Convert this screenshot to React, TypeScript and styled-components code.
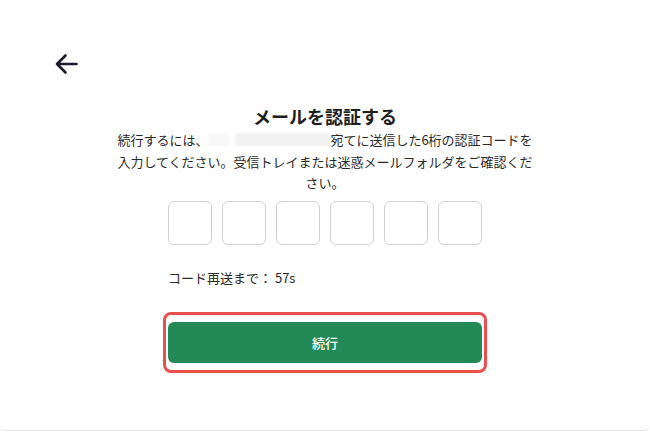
import styled, { createGlobalStyle } from 'styled-components';

const GlobalStyle = createGlobalStyle`
  html, body {
    margin: 0;
    padding: 0;
    background: #ffffff;
  }
  body {
    font-family: "Noto Sans CJK JP", "Noto Sans", "Liberation Sans", sans-serif;
    color: #222222;
  }
`;

const Card = styled.div`
  box-sizing: border-box;
  height: 431px;
  background: #ffffff;
  border-bottom: 1px solid #e4e4e4;
  border-radius: 0 0 6px 6px;
  padding: 53px 0 0;
`;

const BackButton = styled.button`
  display: block;
  margin-left: 54px;
  padding: 0;
  border: none;
  background: none;
  width: 24px;
  height: 22px;
  cursor: pointer;
  color: #1c1c2a;
`;

const Content = styled.div`
  display: flex;
  flex-direction: column;
  align-items: center;
  margin-top: 28px;
`;

const Title = styled.h1`
  margin: 0;
  font-size: 18px;
  font-weight: 700;
  line-height: 26px;
  color: #1f1f1f;
`;

const Description = styled.p`
  margin: 0;
  width: 420px;
  font-size: 13px;
  line-height: 21.5px;
  text-align: center;
  color: #2a2a2a;
`;

// the address is blurred out in the screenshot
const Blurred = styled.span`
  display: inline-block;
  width: 122px;
  height: 13px;
  vertical-align: -1px;
  background: linear-gradient(
    to right,
    #f8f8f8 0 18%,
    #ffffff 18% 22%,
    #f2f2f2 22% 100%
  );
  filter: blur(1px);
`;

const CodeRow = styled.div`
  display: flex;
  gap: 10px;
  margin-top: 7px;
`;

const CodeBox = styled.input`
  box-sizing: border-box;
  width: 44px;
  height: 44px;
  border: 1px solid #d2d2d2;
  border-radius: 6px;
  background: #ffffff;
  text-align: center;
  font-size: 18px;
  outline: none;
`;

const Resend = styled.div`
  width: 314px;
  margin-top: 23px;
  font-size: 13px;
  line-height: 20px;
  color: #2a2a2a;
`;

const Highlight = styled.div`
  margin-top: 24px;
  padding: 7px 2px;
  border: 3px solid #e8504d;
  border-radius: 8px;
`;

const SubmitButton = styled.button`
  display: block;
  width: 314px;
  height: 41px;
  border: none;
  border-radius: 6px;
  background: #238a57;
  color: #ffffff;
  font-family: inherit;
  font-size: 13px;
  font-weight: 500;
  cursor: pointer;
`;

function ArrowLeft() {
  return (
    <svg width="24" height="22" viewBox="0 0 24 22" fill="none">
      <path
        d="M22.5 11H3M11.5 2.5L3 11l8.5 8.5"
        stroke="currentColor"
        strokeWidth="2.6"
        strokeLinecap="round"
        strokeLinejoin="round"
      />
    </svg>
  );
}

export default function App() {
  const digits = [0, 1, 2, 3, 4, 5];
  return (
    <>
      <GlobalStyle />
      <Card>
        <BackButton aria-label="戻る">
          <ArrowLeft />
        </BackButton>
        <Content>
          <Title>メールを認証する</Title>
          <Description>
            続行するには、<Blurred />宛てに送信した6桁の認証コードを入力してください。受信トレイまたは迷惑メールフォルダをご確認ください。
          </Description>
          <CodeRow>
            {digits.map((d) => (
              <CodeBox key={d} maxLength={1} inputMode="numeric" />
            ))}
          </CodeRow>
          <Resend>コード再送まで： 57s</Resend>
          <Highlight>
            <SubmitButton>続行</SubmitButton>
          </Highlight>
        </Content>
      </Card>
    </>
  );
}
